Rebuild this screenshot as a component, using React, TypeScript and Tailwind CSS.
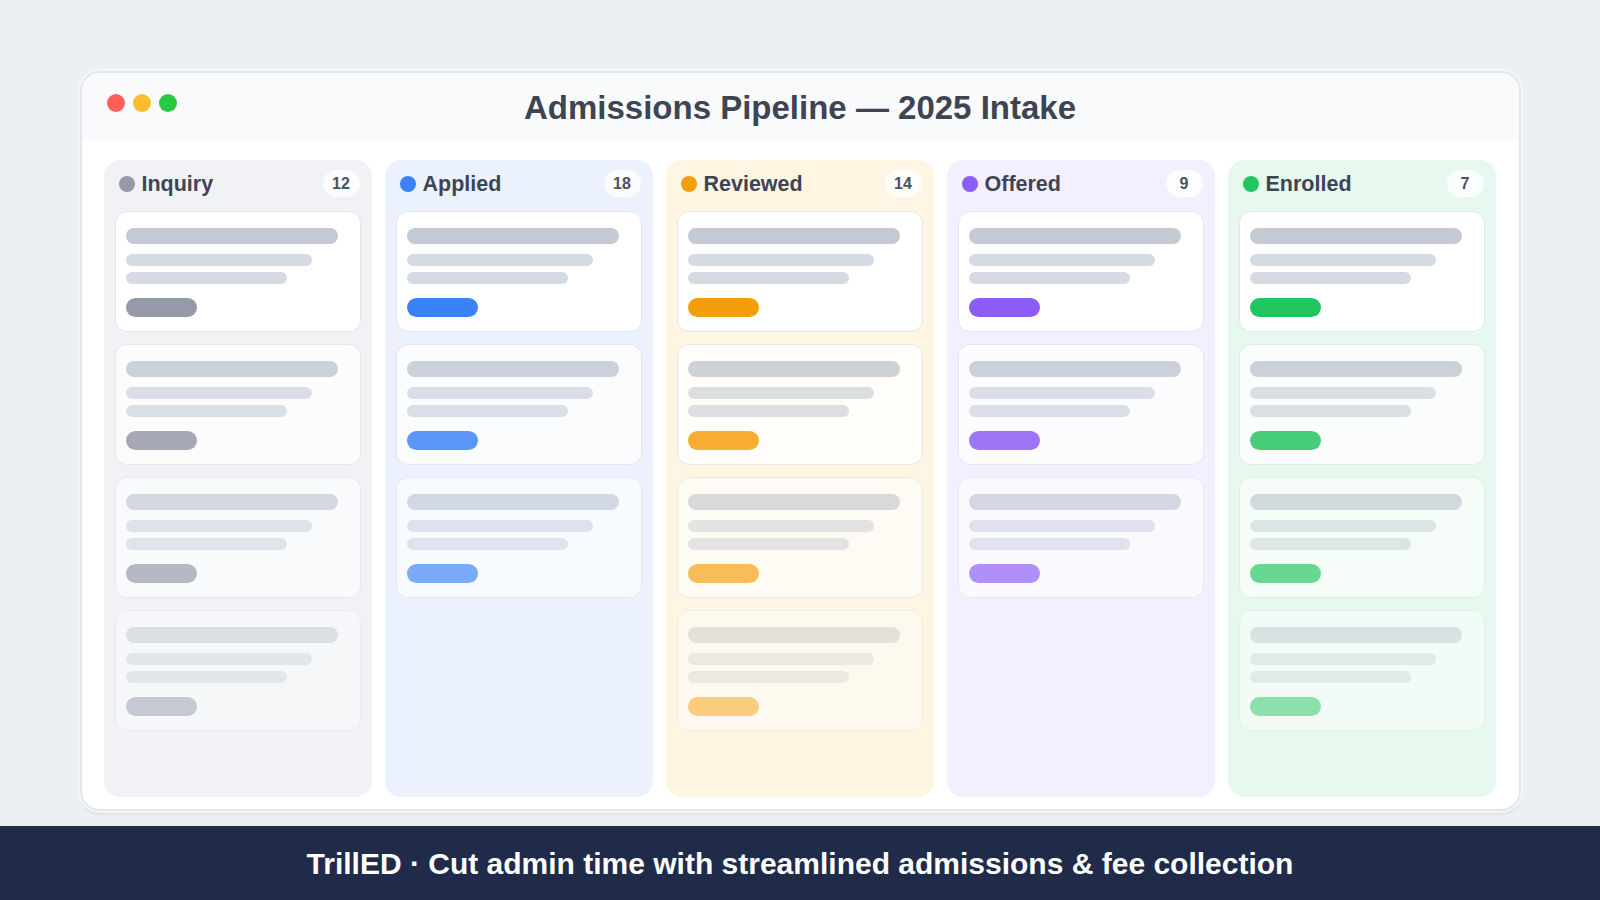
const columns = [
  { name: "Inquiry", count: 12, dot: "bg-[#949aa7]", bg: "bg-[#f0f2f5]", cards: 4 },
  { name: "Applied", count: 18, dot: "bg-[#3b82f6]", bg: "bg-[#ebf2fe]", cards: 3 },
  { name: "Reviewed", count: 14, dot: "bg-[#f59e0b]", bg: "bg-[#fef5e2]", cards: 4 },
  { name: "Offered", count: 9, dot: "bg-[#8b5cf6]", bg: "bg-[#f3effe]", cards: 3 },
  { name: "Enrolled", count: 7, dot: "bg-[#22c55e]", bg: "bg-[#e7f9ee]", cards: 4 },
];

// cards fade out further down each column
const fades = ["opacity-100", "opacity-[0.82]", "opacity-[0.64]", "opacity-[0.46]"];

function Card({ pill, fade }: { pill: string; fade: string }) {
  return (
    <div className={`rounded-xl border border-[#e2e5ea] bg-white px-[10px] pt-[16px] pb-[14px] ${fade}`}>
      <div className="h-[16px] w-[212px] rounded-full bg-[#c4cad4]" />
      <div className="mt-[10px] h-[12px] w-[186px] rounded-full bg-[#d5dbe3]" />
      <div className="mt-[6px] h-[12px] w-[161px] rounded-full bg-[#d5dbe3]" />
      <div className={`mt-[14px] h-[19px] w-[71px] rounded-full ${pill}`} />
    </div>
  );
}

export default function App() {
  return (
    <main
      className="flex h-screen w-full flex-col bg-[#eceff4]"
      style={{ fontFamily: '"Liberation Sans", Arial, sans-serif' }}
    >
      <section className="flex-1 pt-[71px]">
        <div className="mx-auto flex h-[740px] w-[1441px] flex-col overflow-hidden rounded-[20px] border-2 border-[#e3e6eb] bg-white shadow-[0_0_0_2px_#f5f6f8,0_3px_3px_rgba(0,0,0,0.10)]">
          {/* Title bar */}
          <div className="grid h-[67px] shrink-0 grid-cols-[1fr_auto_1fr] items-center bg-[#f9fafb] px-[25px]">
            <div className="flex -translate-y-[4px] gap-[8px]">
              <span className="h-[18px] w-[18px] rounded-full bg-[#ff5f57]" />
              <span className="h-[18px] w-[18px] rounded-full bg-[#febc2e]" />
              <span className="h-[18px] w-[18px] rounded-full bg-[#28c840]" />
            </div>
            <h1 className="translate-y-[1px] text-[33px] font-bold text-[#3d4452]">
              Admissions Pipeline — 2025 Intake
            </h1>
            <div />
          </div>

          {/* Board */}
          <div className="grid flex-1 grid-cols-5 gap-[13px] pt-[20px] pr-[23px] pb-[12px] pl-[22px]">
            {columns.map((col) => (
              <div key={col.name} className={`flex flex-col rounded-2xl px-[11px] pt-[10px] ${col.bg}`}>
                <div className="mb-[14px] flex h-[27px] items-center pl-[4px] pr-[1px]">
                  <span className={`h-[16px] w-[16px] rounded-full ${col.dot}`} />
                  <span className="ml-[7px] translate-y-[1px] text-[21.5px] font-bold text-[#3d4555]">
                    {col.name}
                  </span>
                  <span className="ml-auto flex h-[27px] w-[37px] items-center justify-center rounded-full bg-white/80 text-[16px] font-bold text-[#4b5261]">
                    {col.count}
                  </span>
                </div>
                <div className="flex flex-col gap-[12px]">
                  {Array.from({ length: col.cards }).map((_, i) => (
                    <Card key={i} pill={col.dot} fade={fades[i]} />
                  ))}
                </div>
              </div>
            ))}
          </div>
        </div>
      </section>

      <footer className="flex h-[74px] shrink-0 items-center justify-center bg-[#1f2b48]">
        <p className="text-[30px] font-bold text-white">
          TrillED · Cut admin time with streamlined admissions &amp; fee collection
        </p>
      </footer>
    </main>
  );
}
